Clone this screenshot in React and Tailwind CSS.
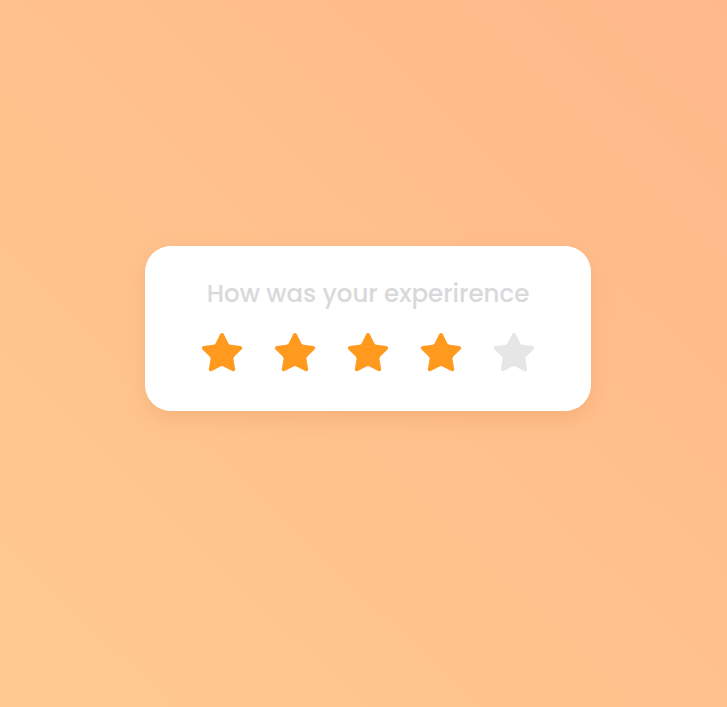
import { Star } from "lucide-react";

const RATING = 4;

const App = () => {
	return (
		<div className="w-full h-[707px] bg-gradient-to-tr from-[#ffca90] to-[#ffb88a] pt-[246px] pl-[145px]">
			<div className="w-[446px] h-[165px] bg-white rounded-[26px] shadow-[0_8px_20px_rgba(230,150,90,0.35)] flex flex-col items-center pt-[30px]">
				<h2 className="text-[24.5px] leading-[36px] font-medium text-[#d9d9dc] font-['Poppins','Inter',sans-serif]">
					How was your experirence
				</h2>
				<div className="flex gap-[27px] mt-[18px]">
					{[1, 2, 3, 4, 5].map((n) => (
						<Star
							key={n}
							size={46}
							strokeWidth={1}
							className={n <= RATING ? "text-[#ff9a1f] fill-[#ff9a1f]" : "text-[#e6e6e6] fill-[#e6e6e6]"}
						/>
					))}
				</div>
			</div>
		</div>
	);
};

export default App;
